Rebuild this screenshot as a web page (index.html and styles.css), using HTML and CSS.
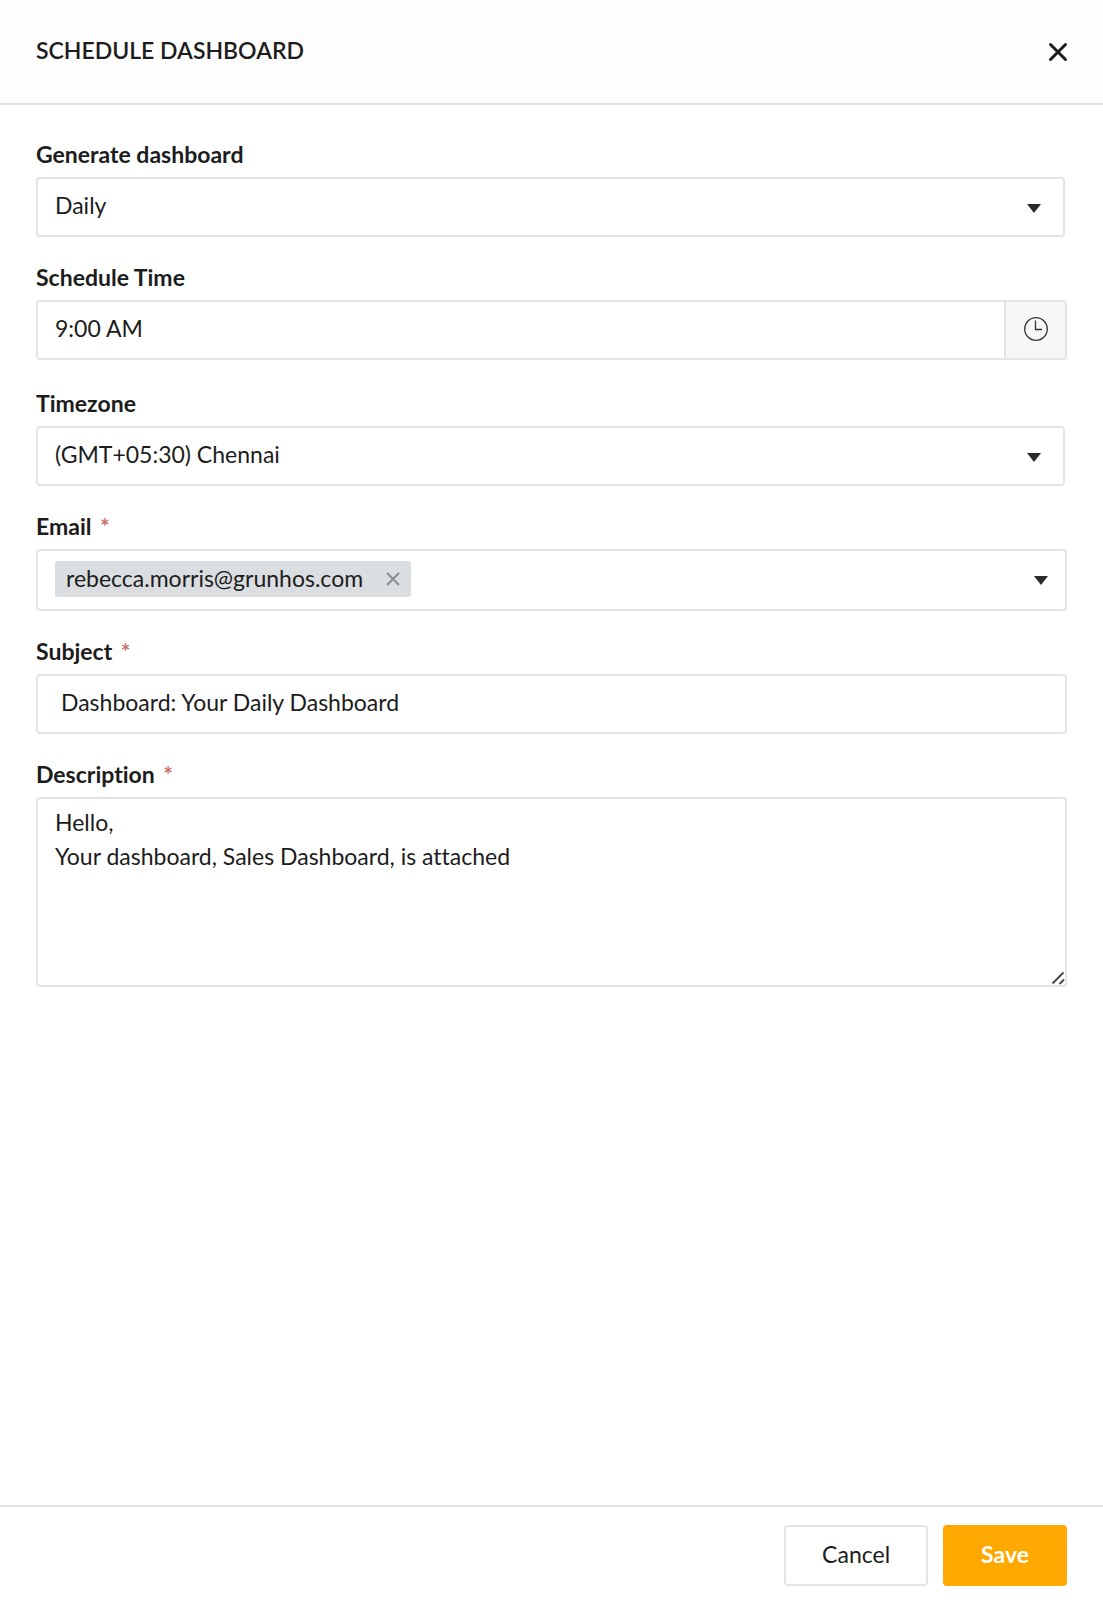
FILE: index.html
```html
<!DOCTYPE html>
<html lang="en">
<head>
  <meta charset="UTF-8" />
  <meta name="viewport" content="width=device-width, initial-scale=1" />
  <title>Schedule Dashboard</title>
  <link rel="stylesheet" href="styles.css">
</head>
<body>

  <header class="header">
    <h1>SCHEDULE DASHBOARD</h1>
    <button type="button" class="close" aria-label="Close">
      <svg width="20" height="20" viewBox="0 0 20 20"><path d="M2.5 2.5l15 15M17.5 2.5l-15 15" /></svg>
    </button>
  </header>

  <form class="form" id="schedule">
    <div class="field">
      <label for="frequency">Generate dashboard</label>
      <div class="select">
        <select id="frequency">
          <option>Daily</option>
          <option>Weekly</option>
          <option>Monthly</option>
        </select>
        <svg class="arrow" width="14" height="9" viewBox="0 0 14 9"><path d="M0 0h14L7 9z" /></svg>
      </div>
    </div>

    <div class="field field-time">
      <label for="time">Schedule Time</label>
      <div class="time">
        <input type="text" id="time" value="9:00 AM" />
        <button type="button" aria-label="Choose time">
          <svg width="26" height="26" viewBox="0 0 26 26"><circle cx="13" cy="13" r="11.3" /><path d="M12.5 4.5v9h6.5" /></svg>
        </button>
      </div>
    </div>

    <div class="field">
      <label for="timezone">Timezone</label>
      <div class="select">
        <select id="timezone">
          <option>(GMT+05:30) Chennai</option>
        </select>
        <svg class="arrow" width="14" height="9" viewBox="0 0 14 9"><path d="M0 0h14L7 9z" /></svg>
      </div>
    </div>

    <div class="field">
      <label for="email">Email <span class="required">*</span></label>
      <div class="box tags">
        <span class="tag">
          rebecca.morris@grunhos.com
          <button type="button" aria-label="Remove">
            <svg width="14" height="14" viewBox="0 0 14 14"><path d="M1 1l12 12M13 1L1 13" /></svg>
          </button>
        </span>
        <input type="text" id="email" />
        <button type="button" class="open" aria-label="Show emails">
          <svg class="arrow" width="14" height="9" viewBox="0 0 14 9"><path d="M0 0h14L7 9z" /></svg>
        </button>
      </div>
    </div>

    <div class="field">
      <label for="subject">Subject <span class="required">*</span></label>
      <input type="text" class="box subject" id="subject" value="Dashboard: Your Daily Dashboard" />
    </div>

    <div class="field">
      <label for="description">Description <span class="required">*</span></label>
      <div class="description">
        <textarea class="box" id="description">Hello,
Your dashboard, Sales Dashboard, is attached</textarea>
        <svg class="grip" width="14" height="14" viewBox="0 0 14 14"><path d="M1.5 12.5l11-11M8.500 13l4.500-4.500" /></svg>
      </div>
    </div>
  </form>

  <footer class="footer">
    <button type="button" class="btn">Cancel</button>
    <button type="submit" form="schedule" class="btn btn-save">Save</button>
  </footer>

</body>
</html>
```
FILE: styles.css
```css
* {
  box-sizing: border-box;
}
body {
  display: flex;
  flex-direction: column;
  min-height: 100vh;
  margin: 0;
  background-color: #fff;
  color: #1c1c1c;
  font-family: Lato, "Open Sans", sans-serif;
  font-size: 23px;
  font-variant-ligatures: none;
}
button, input, select, textarea {
  margin: 0;
  padding: 0;
  border: none;
  background: none;
  color: inherit;
  font: inherit;
  font-variant-ligatures: none;
  outline: none;
}
button {
  cursor: pointer;
}
svg {
  display: block;
}

.header {
  display: flex;
  justify-content: space-between;
  align-items: center;
  padding: 34px 35px 37px 36px;
  background-color: #fdfdfd;
  border-bottom: 2px solid #e4e4e4;
}
.header h1 {
  margin: 0;
  font-size: 23px;
  font-weight: 600;
  line-height: 32px;
}
.close {
  padding-top: 4px;
}
.close svg {
  fill: none;
  stroke: #1c1c1c;
  stroke-width: 3;
  stroke-linecap: round;
}

.form {
  flex: 1;
  padding: 36px;
}
.field {
  margin-bottom: 27px;
}
.field-time {
  margin-bottom: 30px;
}
label {
  display: block;
  margin-bottom: 10px;
  font-weight: 700;
  line-height: 26px;
}
.required {
  margin-left: 3px;
  color: #c9706c;
  line-height: 20px;
}

.box, .select select, .time {
  display: block;
  width: 100%;
  height: 60px;
  padding: 0 17px 4px;
  border: 2px solid #e4e4e4;
  border-radius: 4px;
}
.select {
  position: relative;
  margin-right: 2px;
}
.select select {
  appearance: none;
}
.arrow {
  fill: #2b2b2b;
}
.select .arrow {
  position: absolute;
  top: 27px;
  right: 24px;
  pointer-events: none;
}

.time {
  display: flex;
  padding: 0;
}
.time input {
  flex: 1;
  min-width: 0;
  padding: 0 17px 4px;
}
.time button {
  display: flex;
  justify-content: center;
  align-items: center;
  width: 61px;
  padding-bottom: 3px;
  border-left: 2px solid #e4e4e4;
  background-color: #f7f7f7;
}
.time svg {
  fill: none;
  stroke: #333;
  stroke-width: 1.3;
}

.tags {
  display: flex;
  align-items: center;
  height: 62px;
  padding-bottom: 2px;
}
.tag {
  display: flex;
  align-items: center;
  gap: 23px;
  height: 36px;
  padding: 0 11px 2px;
  background-color: #dadee1;
  border-radius: 3px;
  white-space: nowrap;
}
.tag button {
  padding-top: 2px;
}
.tag svg {
  fill: none;
  stroke: #8a8d8f;
  stroke-width: 2;
}
.tags input {
  flex: 1;
  min-width: 0;
}
.open {
  padding-top: 3px;
}
.subject {
  padding-left: 23px;
}

.description {
  position: relative;
}
.description textarea {
  height: 190px;
  padding-top: 6px;
  line-height: 34px;
  resize: vertical;
}
.description textarea::-webkit-resizer {
  display: none;
}
.grip {
  position: absolute;
  right: 2px;
  bottom: 2px;
  fill: none;
  stroke: #4a4a4a;
  stroke-width: 2;
  pointer-events: none;
}

.footer {
  display: flex;
  justify-content: flex-end;
  gap: 15px;
  padding: 18px 36px 14px;
  border-top: 2px solid #e4e4e4;
}
.btn {
  height: 61px;
  padding: 0 36px 3px;
  border: 2px solid #e4e4e4;
  border-radius: 4px;
}
.btn-save {
  border-color: #ffa800;
  background-color: #ffa800;
  color: #fff;
  font-weight: 700;
}
```
